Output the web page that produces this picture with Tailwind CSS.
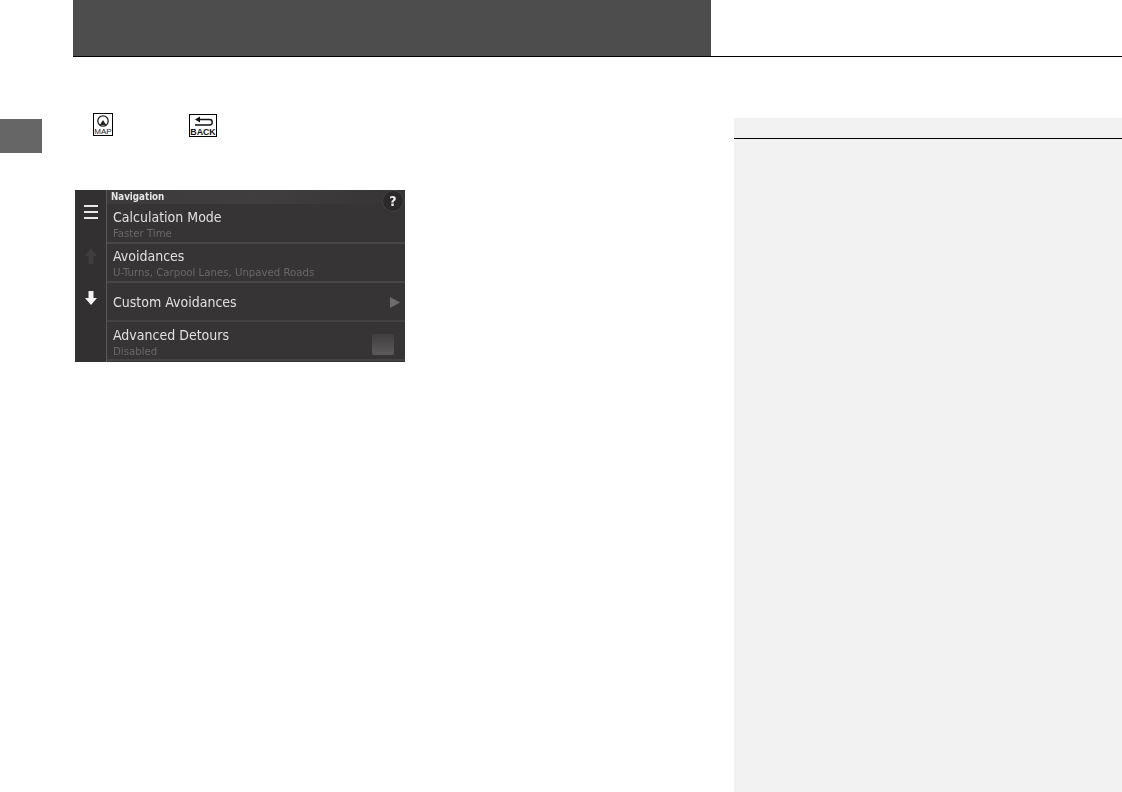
<!DOCTYPE html>
<html><head><meta charset="utf-8"><script src="https://cdn.jsdelivr.net/npm/@tailwindcss/browser@4"></script></head>
<body class="bg-white overflow-hidden">
<div class="w-[1122px] h-[792px] flex flex-col font-['Liberation_Sans',sans-serif]">
  <header class="ml-[73px] h-[57px] shrink-0 border-b border-black"><div class="w-[638px] h-[56px] bg-[#4d4d4d]"></div></header>
  <div class="flex flex-1 min-h-0">
    <div class="w-[73px] shrink-0 pt-[62px]"><div class="w-[42px] h-[34px] bg-[#666666]"></div></div>
    <main class="w-[661px] shrink-0 pt-[57px]">
      <div class="h-[24px] relative">
        <svg class="absolute left-[20px] top-[-1px]" width="20" height="23" viewBox="0 0 20 23"><rect x=".5" y=".5" width="19" height="22" fill="#fff" stroke="#000"/><circle cx="10" cy="8" r="5.200" fill="none" stroke="#222" stroke-width="1.300"/><path d="M10 7l3.200 5h-6.400z" fill="#222"/><text x="10" y="20.500" text-anchor="middle" font-family="Liberation Sans" font-size="8" fill="#222">MAP</text></svg>
        <svg class="absolute left-[116px] top-0" width="28" height="23" viewBox="0 0 28 23"><rect x=".5" y=".5" width="27" height="22" fill="#fff" stroke="#000"/><path d="M10 5.500h10.500a2.600 2.600 0 0 1 0 5.500H6" fill="none" stroke="#111" stroke-width="1.400"/><path d="M6 5.500l5-3v6z" fill="#111"/><text x="14" y="20.500" text-anchor="middle" font-family="Liberation Sans" font-weight="700" font-size="8.800" fill="#111">BACK</text></svg>
      </div>
      <div class="ml-[2px] mt-[52px] w-[330px] h-[172px] bg-[#363435] flex font-['DejaVu_Sans_Condensed','DejaVu_Sans',sans-serif] overflow-hidden">
        <div class="w-[32px] shrink-0 border-r border-[#5a5859] bg-[#323031] flex flex-col items-center blur-[0.4px]">
          <div class="mt-[15px] flex flex-col gap-[4px]"><span class="block w-[14px] h-[2px] bg-[#e8e8e8]"></span><span class="block w-[14px] h-[2px] bg-[#e8e8e8]"></span><span class="block w-[14px] h-[2px] bg-[#e8e8e8]"></span></div>
          <svg class="mt-[29px]" width="12" height="16" viewBox="0 0 12 16"><path d="M6 0l6 8H8.500v8h-5V8H0z" fill="#3f3d3e"/></svg>
          <svg class="mt-[27px]" width="12" height="14" viewBox="0 0 12 14"><path d="M6 14l6-7H8.500V0h-5v7H0z" fill="#f2f2f2"/></svg>
        </div>
        <div class="flex-1 min-w-0 flex flex-col relative blur-[0.4px]">
          <div class="h-[14px] pl-[4px] bg-gradient-to-r from-[#3c3a3b] via-[#403e3f] to-[#363435] text-[9.700px] leading-[14px] font-bold text-[#e6e6e6]">Navigation</div>
          <div class="h-[40px] pl-[6px] border-b-2 border-[#484647] flex flex-col">
            <div class="text-[14px] leading-[19px] pt-[4px] h-[23px] text-[#e0e0e0]">Calculation Mode</div>
            <div class="text-[11.300px] leading-[13px] text-[#6a6869]">Faster Time</div>
          </div>
          <div class="h-[39px] pl-[6px] border-b-2 border-[#484647] flex flex-col">
            <div class="text-[14px] leading-[19px] pt-[3px] h-[22px] text-[#e0e0e0]">Avoidances</div>
            <div class="text-[11.300px] leading-[13px] text-[#6a6869]">U-Turns, Carpool Lanes, Unpaved Roads</div>
          </div>
          <div class="h-[39px] pl-[6px] pr-[5px] pt-[2px] border-b-2 border-[#444243] flex items-center justify-between">
            <div class="text-[14px] text-[#e0e0e0]">Custom Avoidances</div>
            <svg width="10" height="11" viewBox="0 0 10 11"><path d="M0 0l10 5.500L0 11z" fill="#6e6c6d"/></svg>
          </div>
          <div class="h-[39px] pl-[6px] pr-[11px] border-b-2 border-[#444243] flex items-center justify-between">
            <div class="flex flex-col">
              <div class="text-[14px] leading-[19px] pt-[2px] h-[21px] text-[#e0e0e0]">Advanced Detours</div>
              <div class="text-[11.300px] leading-[13px] text-[#6a6869]">Disabled</div>
            </div>
            <div class="w-[22px] h-[21px] mt-[8px] rounded-[2px] bg-gradient-to-b from-[#403e3f] to-[#5c5a5b]"></div>
          </div>
          <div class="absolute right-[1px] top-[0px] w-[22px] h-[22px] rounded-full bg-[#2b292a] border border-[#444243] flex items-center justify-center text-[14px] leading-none font-bold text-[#eeeeee]">?</div>
        </div>
      </div>
    </main>
    <aside class="w-[388px] shrink-0 mt-[61px] bg-[#f2f2f2]"><div class="h-[21px] border-b border-black"></div></aside>
  </div>
</div>
</body></html>
